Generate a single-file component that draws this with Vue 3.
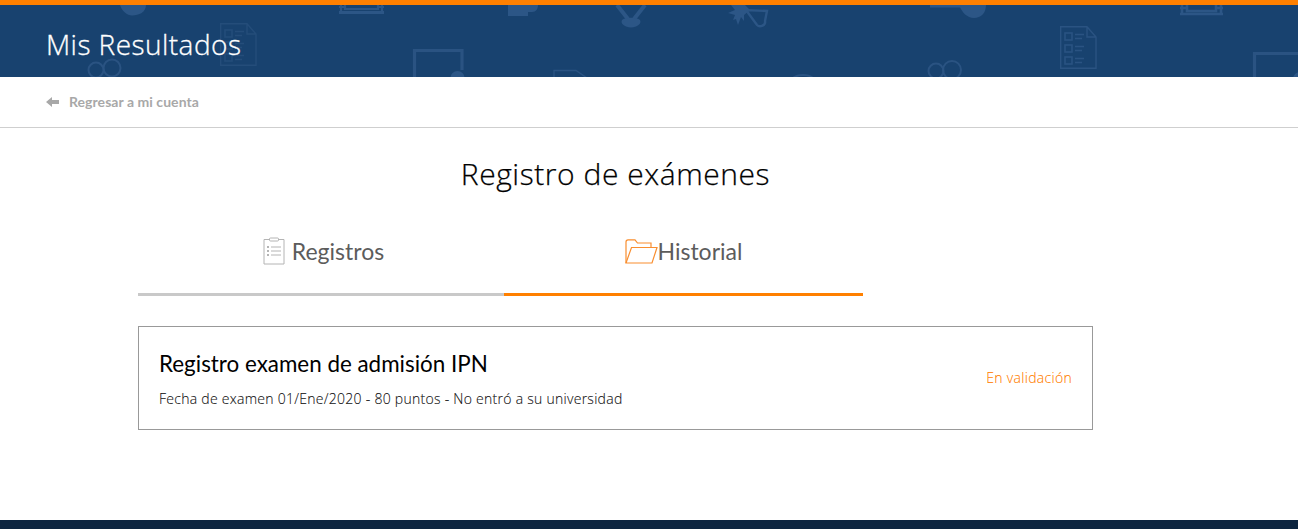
<script setup>
const rows = [0, 12, 24]
const docs = [
  { x: 220, y: 23, c: '#244d7a' },
  { x: 1060, y: 26, c: '#2a5382' }
]
const cams = [
  { a: [96, 70, 7.5], b: [112, 68, 8.5] },
  { a: [936, 71, 7.5], b: [952, 70, 9] }
]
</script>

<template>
  <div class="page">
    <header class="hero">
      <svg class="pattern" width="1298" height="72" viewBox="0 5 1298 72" fill="none" aria-hidden="true">
        <g stroke="#2a5382" fill="none">
          <g v-for="d in docs" :key="d.x" :transform="`translate(${d.x} ${d.y})`" :stroke="d.c" stroke-width="1.4">
            <path d="M.7 .7H27L36 11V42.3H.7Z M27 .7V11H36" />
            <g v-for="r in rows" :key="r" :transform="`translate(5 ${r + 7})`">
              <rect width="7" height="7" stroke-width="1.6" />
              <path d="M10 1.500H19M10 5.500H17" />
            </g>
          </g>
          <g v-for="(k, i) in cams" :key="i" stroke-width="2">
            <circle :cx="k.a[0]" :cy="k.a[1]" :r="k.a[2]" />
            <circle :cx="k.b[0]" :cy="k.b[1]" :r="k.b[2]" />
          </g>
          <path d="M414.500 78V50.500H462V70" stroke-width="3.2" />
          <path d="M1254.500 78V53.500H1298" stroke-width="3.2" />
          <path d="M554 78V70.500H576L587 78" stroke-width="1.4" />
          <path d="M793 78C798 74 808 74 813 78" stroke-width="2" />
          <path d="M617 5L628 19M645 5L634 19" stroke="#2c5686" stroke-width="4" />
          <path d="M746 10L757 25C760 28 766 25 765 21L767 11Z" stroke="#2c5686" stroke-width="2.4" />
          <path d="M1182 5V15M1221 5V15M1180 8H1186M1217 8H1223M1180 14H1223M1187 5V11H1216V5" stroke="#2c5686" stroke-width="2.600" />
          <path d="M341 5V12M382 5V12M339 7H345M378 7H384M345 5V9H378V5" stroke="#2c5686" stroke-width="2.200" />
        </g>
        <g fill="#2c5686">
          <path d="M120 5H146C146 12 139 15.500 132 15.500C127 15.500 122 11 120 5Z" />
          <path d="M339 11H384V14H339Z" />
          <path d="M508 5H538C538 9 536 12 532 12H528V16H508Z" />
          <path d="M622 20C625 17 637 17 640 20C642 24 637 27 631 27.500C625 27 620 24 622 20Z" />
          <path d="M731 5H745L750 10L744 15L744 21L741 17L738 25L736 19L733 20L735 15L728 13L735 10Z" />
          <path d="M930 5H962V7.500H930Z" />
          <path d="M960 7C962 12 967 18 974 18C981 18 986 13 986 5H960Z" />
          <circle cx="457.500" cy="78" r="7" />
          <circle cx="1300" cy="79" r="7" />
        </g>
      </svg>
      <h1 class="title">Mis Resultados</h1>
    </header>

    <nav class="back">
      <svg class="arrow" width="13" height="10" viewBox="0 0 13 10"><path d="M0 5L6 0V3H13V7H6V10Z" fill="#a8a8a8" /></svg>
      <a class="back-link">Regresar a mi cuenta</a>
    </nav>

    <main class="content">
      <h2 class="heading">Registro de exámenes</h2>

      <div class="tabs">
        <div class="tab tab-left">
          <svg width="22" height="28" viewBox="0 0 22 28" fill="none" stroke="#b4b4b4">
            <path d="M6.500 2.500H1V27H21V2.500H15.500" />
            <rect x="6.500" y="1" width="9" height="3" rx="1" />
            <path d="M8 10H18M8 14H18M8 18H18" />
            <path d="M4 10H6M4 14H6M4 18H6" stroke-width="2" />
          </svg>
          <span>Registros</span>
        </div>
        <div class="tab tab-right">
          <svg width="33" height="25" viewBox="0 0 33 25" fill="none" stroke="#f98e2f" stroke-width="1.2">
            <path d="M1 24V3C1 1.500 2 .8 3 .8H10L12.500 4H26V8.500" />
            <path d="M1 24H27L32 8.500H6.500L1 24Z" />
          </svg>
          <span>Historial</span>
        </div>
      </div>

      <article class="card">
        <div class="card-text">
          <h3 class="card-title">Registro examen de admisión IPN</h3>
          <p class="card-sub">Fecha de examen 01/Ene/2020 - 80 puntos - No entró a su universidad</p>
        </div>
        <span class="status">En validación</span>
      </article>
    </main>

    <footer class="foot"></footer>
  </div>
</template>

<style>
html, body { margin: 0; background: #fff; }
</style>

<style scoped>
.page {
  height: 529px;
  display: flex;
  flex-direction: column;
  overflow: hidden;
  font-family: "Lato", "Open Sans", sans-serif;
}
.hero {
  position: relative;
  height: 72px;
  flex: none;
  background: #18426f;
  border-top: 5px solid #ff8000;
  overflow: hidden;
}
.pattern { position: absolute; left: 0; top: 0; }
.title {
  position: relative;
  margin: 0;
  padding: 22px 0 0 46px;
  font: 300 28px/34px "Open Sans", sans-serif;
  -webkit-text-stroke: .3px #fff;
  letter-spacing: .45px;
  color: #fff;
}
.back {
  height: 50px;
  flex: none;
  display: flex;
  align-items: center;
  gap: 10px;
  padding-left: 46px;
  border-bottom: 1px solid #cfcfcf;
}
.back-link { font-size: 14px; line-height: 16px; font-weight: 700; letter-spacing: .05px; color: #a8a8a8; padding-bottom: 1px; }
.content {
  flex: 1;
  padding: 0 0 0 138px;
}
.heading {
  width: 955px;
  margin: 28px 0 0;
  text-align: center;
  font: 300 30px/38px "Open Sans", sans-serif;
  -webkit-text-stroke: .25px #000;
  letter-spacing: .55px;
  color: #000;
  position: relative;
  top: -1px;
}
.tabs { display: flex; width: 725px; margin-top: 27px; }
.tab {
  height: 75px;
  box-sizing: border-box;
  display: flex;
  align-items: center;
  justify-content: center;
  font-size: 23px;
  color: #5c5c5c;
  padding-bottom: 12px;
  border-bottom: 3px solid #c9c9c9;
}
.tab-left { width: 366px; gap: 7px; padding-left: 5px; }
.tab-right { width: 359px; border-bottom-color: #ff8000; }
.card {
  width: 955px;
  height: 104px;
  box-sizing: border-box;
  margin-top: 30px;
  padding: 0 20px 0 20px;
  border: 1px solid #999;
  display: flex;
  align-items: center;
  justify-content: space-between;
}
.card-text { padding-top: 1px; }
.card-title { margin: 0; font-size: 22.4px; font-weight: 400; line-height: 28px; color: #000; }
.card-sub { margin: 12px 0 0; font: 300 14px/18px "Open Sans", sans-serif; -webkit-text-stroke: .1px #111; letter-spacing: .27px; color: #111; }
.status { font: 300 14px/18px "Open Sans", sans-serif; -webkit-text-stroke: .1px #ff8000; letter-spacing: .3px; color: #ff8000; }
.foot { height: 9px; flex: none; background: #0d2540; }
</style>
